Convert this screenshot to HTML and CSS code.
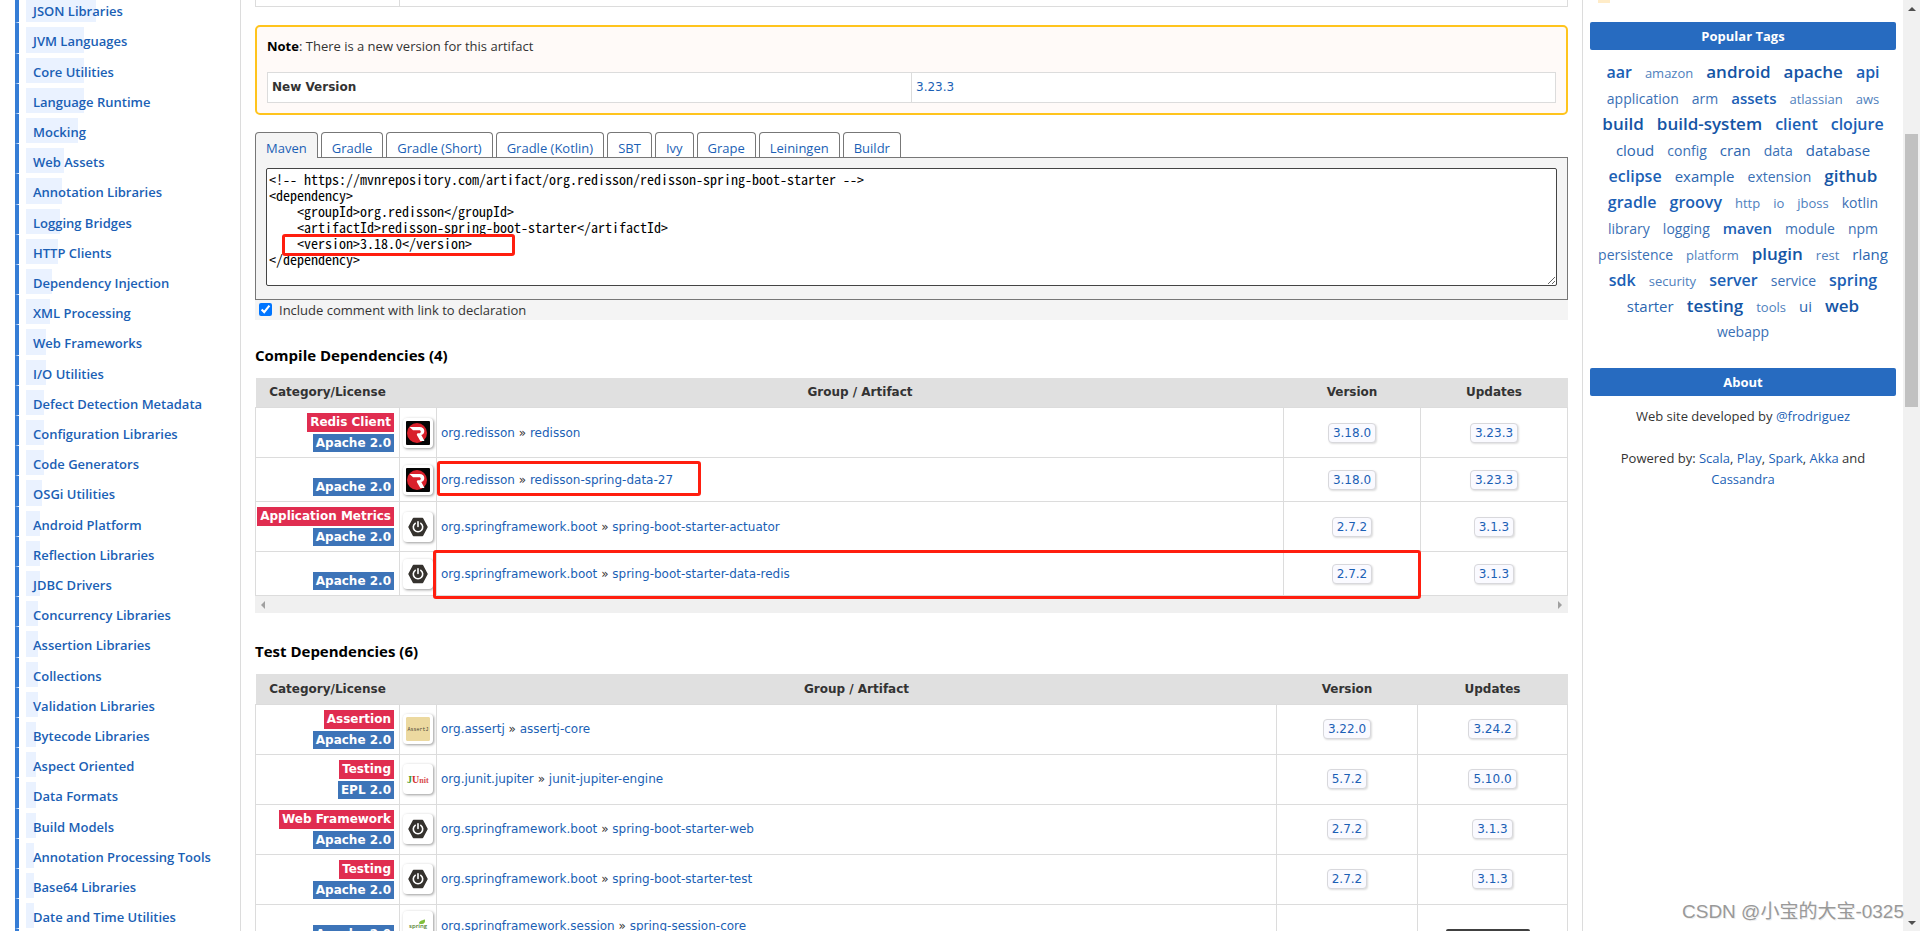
FILE: index.html
```
<!DOCTYPE html>
<html lang="en">
<head>
<meta charset="utf-8">
<title>redisson-spring-boot-starter 3.18.0</title>
<link rel="stylesheet" href="styles.css">
</head>
<body>
<svg class="defs" aria-hidden="true">
  <symbol id="redisson" viewBox="0 0 24 24">
    <rect width="24" height="24" fill="#050505"/>
    <circle cx="11" cy="12" r="10" fill="#d9202b"/>
    <path d="M3.500 6h10c3.200 0 4.800 1.700 4.800 4s-1.300 3.500-3 4l3.200 6h-4.200L10.700 13.700 11.500 12.300h1.700c1 0 1.600-.6 1.600-1.500s-.6-1.500-1.600-1.500H7z" fill="#fff"/>
  </symbol>
  <symbol id="boot" viewBox="0 0 24 24">
    <path d="M7.500 3.500h9L21 12l-4.500 8.500h-9L3 12z" fill="#35322e" stroke="#35322e" stroke-width="1.500" stroke-linejoin="round"/>
    <path d="M9.200 8.300a4.700 4.700 0 1 0 5.600 0M12 6.800v4.700" fill="none" stroke="#fff" stroke-width="1.600" stroke-linecap="round"/>
  </symbol>
</svg>
<div class="page">
  <nav class="categories" aria-label="Categories">
    <ul>
      <li><a href="#"><i style="width:70px"></i>JSON Libraries</a></li>
      <li><a href="#"><i style="width:58px"></i>JVM Languages</a></li>
      <li><a href="#"><i style="width:58px"></i>Core Utilities</a></li>
      <li><a href="#"><i style="width:58px"></i>Language Runtime</a></li>
      <li><a href="#"><i style="width:52px"></i>Mocking</a></li>
      <li><a href="#"><i style="width:38px"></i>Web Assets</a></li>
      <li><a href="#"><i style="width:36px"></i>Annotation Libraries</a></li>
      <li><a href="#"><i style="width:34px"></i>Logging Bridges</a></li>
      <li><a href="#"><i style="width:32px"></i>HTTP Clients</a></li>
      <li><a href="#"><i style="width:26px"></i>Dependency Injection</a></li>
      <li><a href="#"><i style="width:24px"></i>XML Processing</a></li>
      <li><a href="#"><i style="width:20px"></i>Web Frameworks</a></li>
      <li><a href="#"><i style="width:20px"></i>I/O Utilities</a></li>
      <li><a href="#"><i style="width:18px"></i>Defect Detection Metadata</a></li>
      <li><a href="#"><i style="width:18px"></i>Configuration Libraries</a></li>
      <li><a href="#"><i style="width:18px"></i>Code Generators</a></li>
      <li><a href="#"><i style="width:16px"></i>OSGi Utilities</a></li>
      <li><a href="#"><i style="width:14px"></i>Android Platform</a></li>
      <li><a href="#"><i style="width:14px"></i>Reflection Libraries</a></li>
      <li><a href="#"><i style="width:14px"></i>JDBC Drivers</a></li>
      <li><a href="#"><i style="width:12px"></i>Concurrency Libraries</a></li>
      <li><a href="#"><i style="width:12px"></i>Assertion Libraries</a></li>
      <li><a href="#"><i style="width:12px"></i>Collections</a></li>
      <li><a href="#"><i style="width:12px"></i>Validation Libraries</a></li>
      <li><a href="#"><i style="width:10px"></i>Bytecode Libraries</a></li>
      <li><a href="#"><i style="width:10px"></i>Aspect Oriented</a></li>
      <li><a href="#"><i style="width:10px"></i>Data Formats</a></li>
      <li><a href="#"><i style="width:10px"></i>Build Models</a></li>
      <li><a href="#"><i style="width:8px"></i>Annotation Processing Tools</a></li>
      <li><a href="#"><i style="width:8px"></i>Base64 Libraries</a></li>
      <li><a href="#"><i style="width:8px"></i>Date and Time Utilities</a></li>
      <li></li>
    </ul>
  </nav>

  <main class="content">
    <table class="info"><tr><td class="info-key"></td><td></td></tr></table>

    <section class="note">
      <p><b>Note</b>: There is a new version for this artifact</p>
      <table class="new-version"><tr><th scope="row">New Version</th><td><a href="#">3.23.3</a></td></tr></table>
    </section>

    <section class="snippet">
      <div class="tabs">
        <a class="tab active" href="#">Maven</a>
        <a class="tab" href="#">Gradle</a>
        <a class="tab" href="#">Gradle (Short)</a>
        <a class="tab" href="#">Gradle (Kotlin)</a>
        <a class="tab" href="#">SBT</a>
        <a class="tab" href="#">Ivy</a>
        <a class="tab" href="#">Grape</a>
        <a class="tab" href="#">Leiningen</a>
        <a class="tab" href="#">Buildr</a>
      </div>
      <div class="panel">
        <textarea aria-label="Maven declaration" spellcheck="false" readonly>&lt;!-- https://mvnrepository.com/artifact/org.redisson/redisson-spring-boot-starter --&gt;
&lt;dependency&gt;
    &lt;groupId&gt;org.redisson&lt;/groupId&gt;
    &lt;artifactId&gt;redisson-spring-boot-starter&lt;/artifactId&gt;
    &lt;version&gt;3.18.0&lt;/version&gt;
&lt;/dependency&gt;</textarea>
        <span class="mark mark-version"></span>
      </div>
      <label class="include"><input type="checkbox" checked>Include comment with link to declaration</label>
    </section>

    <section class="deps">
      <h2>Compile Dependencies (4)</h2>
      <div class="table-wrap">
        <table class="dep-table">
          <colgroup><col class="c-cat"><col class="c-icon"><col><col class="c-ver"><col class="c-upd"></colgroup>
          <thead><tr><th>Category/License</th><th></th><th>Group / Artifact</th><th>Version</th><th>Updates</th></tr></thead>
          <tbody>
            <tr><td class="cat"><a class="badge red" href="#">Redis Client</a><span class="badge">Apache 2.0</span></td><td class="ico"><svg><use href="#redisson"/></svg></td><td><a href="#">org.redisson</a> » <a href="#">redisson</a></td><td class="num"><a class="ver" href="#">3.18.0</a></td><td class="num"><a class="ver" href="#">3.23.3</a></td></tr>
            <tr><td class="cat"><span class="badge">Apache 2.0</span></td><td class="ico"><svg><use href="#redisson"/></svg></td><td><span class="marked"><a href="#">org.redisson</a> » <a href="#">redisson-spring-data-27</a><span class="mark mark-artifact"></span></span></td><td class="num"><a class="ver" href="#">3.18.0</a></td><td class="num"><a class="ver" href="#">3.23.3</a></td></tr>
            <tr><td class="cat"><a class="badge red" href="#">Application Metrics</a><span class="badge">Apache 2.0</span></td><td class="ico"><svg><use href="#boot"/></svg></td><td><a href="#">org.springframework.boot</a> » <a href="#">spring-boot-starter-actuator</a></td><td class="num"><a class="ver" href="#">2.7.2</a></td><td class="num"><a class="ver" href="#">3.1.3</a></td></tr>
            <tr><td class="cat"><span class="badge">Apache 2.0</span></td><td class="ico"><svg><use href="#boot"/></svg></td><td><a href="#">org.springframework.boot</a> » <a href="#">spring-boot-starter-data-redis</a></td><td class="num"><a class="ver" href="#">2.7.2</a></td><td class="num"><a class="ver" href="#">3.1.3</a></td></tr>
          </tbody>
        </table>
        <span class="mark mark-row"></span>
        <div class="hscroll"><span class="tri left"></span><span class="tri right"></span></div>
      </div>
    </section>

    <section class="deps test">
      <h2>Test Dependencies (6)</h2>
      <div class="table-wrap">
        <table class="dep-table">
          <colgroup><col class="c-cat"><col class="c-icon"><col><col class="c-ver"><col class="c-upd"></colgroup>
          <thead><tr><th>Category/License</th><th></th><th>Group / Artifact</th><th>Version</th><th>Updates</th></tr></thead>
          <tbody>
            <tr><td class="cat"><a class="badge red" href="#">Assertion</a><span class="badge">Apache 2.0</span></td><td class="ico"><svg viewBox="0 0 24 24"><rect width="24" height="24" rx="1" fill="#ecd9a0"/><text x="12" y="14" text-anchor="middle" font-family="Liberation Mono, monospace" font-size="5" fill="#4a4436">AssertJ</text></svg></td><td><a href="#">org.assertj</a> » <a href="#">assertj-core</a></td><td class="num"><a class="ver" href="#">3.22.0</a></td><td class="num"><a class="ver" href="#">3.24.2</a></td></tr>
            <tr><td class="cat"><a class="badge red" href="#">Testing</a><span class="badge">EPL 2.0</span></td><td class="ico"><svg viewBox="0 0 24 24"><text x="1" y="16" font-family="Liberation Serif, serif" font-weight="700" font-size="10"><tspan fill="#3f9b2c">J</tspan><tspan fill="#d32c2c">U</tspan><tspan fill="#d84a4a" font-size="8">nit</tspan></text></svg></td><td><a href="#">org.junit.jupiter</a> » <a href="#">junit-jupiter-engine</a></td><td class="num"><a class="ver" href="#">5.7.2</a></td><td class="num"><a class="ver" href="#">5.10.0</a></td></tr>
            <tr><td class="cat"><a class="badge red" href="#">Web Framework</a><span class="badge">Apache 2.0</span></td><td class="ico"><svg><use href="#boot"/></svg></td><td><a href="#">org.springframework.boot</a> » <a href="#">spring-boot-starter-web</a></td><td class="num"><a class="ver" href="#">2.7.2</a></td><td class="num"><a class="ver" href="#">3.1.3</a></td></tr>
            <tr><td class="cat"><a class="badge red" href="#">Testing</a><span class="badge">Apache 2.0</span></td><td class="ico"><svg><use href="#boot"/></svg></td><td><a href="#">org.springframework.boot</a> » <a href="#">spring-boot-starter-test</a></td><td class="num"><a class="ver" href="#">2.7.2</a></td><td class="num"><a class="ver" href="#">3.1.3</a></td></tr>
            <tr><td class="cat"><span class="badge">Apache 2.0</span></td><td class="ico"><svg viewBox="0 0 24 24"><text x="3" y="14" font-family="Open Sans, sans-serif" font-weight="600" font-size="6" fill="#4f7d2c">spring</text><path d="M13 9.500c0-2.500 2.500-3 6-4 .6 3.500-1.500 5.500-6 4z" fill="#7fbf3a"/></svg></td><td><a href="#">org.springframework.session</a> » <a href="#">spring-session-core</a></td><td class="num"></td><td class="num"></td></tr>
          </tbody>
        </table>
      </div>
    </section>
  </main>

  <aside class="side">
    <div class="chip"></div>
    <h3>Popular Tags</h3>
    <div class="tags">
      <div><a class="t5" href="#">aar</a><a class="t1" href="#">amazon</a><a class="t6" href="#">android</a><a class="t6" href="#">apache</a><a class="t5" href="#">api</a></div>
      <div><a class="t2" href="#">application</a><a class="t2" href="#">arm</a><a class="t4" href="#">assets</a><a class="t1" href="#">atlassian</a><a class="t1" href="#">aws</a></div>
      <div><a class="t6" href="#">build</a><a class="t6" href="#">build-system</a><a class="t5" href="#">client</a><a class="t5" href="#">clojure</a></div>
      <div><a class="t3" href="#">cloud</a><a class="t2" href="#">config</a><a class="t3" href="#">cran</a><a class="t2" href="#">data</a><a class="t3" href="#">database</a></div>
      <div><a class="t5" href="#">eclipse</a><a class="t3" href="#">example</a><a class="t2" href="#">extension</a><a class="t6" href="#">github</a></div>
      <div><a class="t5" href="#">gradle</a><a class="t5" href="#">groovy</a><a class="t1" href="#">http</a><a class="t1" href="#">io</a><a class="t1" href="#">jboss</a><a class="t2" href="#">kotlin</a></div>
      <div><a class="t2" href="#">library</a><a class="t2" href="#">logging</a><a class="t4" href="#">maven</a><a class="t2" href="#">module</a><a class="t2" href="#">npm</a></div>
      <div><a class="t2" href="#">persistence</a><a class="t1" href="#">platform</a><a class="t6" href="#">plugin</a><a class="t1" href="#">rest</a><a class="t3" href="#">rlang</a></div>
      <div><a class="t5" href="#">sdk</a><a class="t1" href="#">security</a><a class="t5" href="#">server</a><a class="t2" href="#">service</a><a class="t5" href="#">spring</a></div>
      <div><a class="t3" href="#">starter</a><a class="t6" href="#">testing</a><a class="t1" href="#">tools</a><a class="t3" href="#">ui</a><a class="t6" href="#">web</a></div>
      <div><a class="t2" href="#">webapp</a></div>
    </div>
    <h3>About</h3>
    <div class="about">
      <p>Web site developed by <a href="#">@frodriguez</a></p>
      <p>Powered by: <a href="#">Scala</a>, <a href="#">Play</a>, <a href="#">Spark</a>, <a href="#">Akka</a> and <a href="#">Cassandra</a></p>
    </div>
  </aside>

  <div class="vscroll"><span class="tri up"></span><span class="thumb"></span><span class="tri down"></span></div>
  <span class="toast"></span>
  <div class="watermark">CSDN @小宝的大宝-0325</div>
</div>
</body>
</html>
```
FILE: styles.css
```
* { box-sizing: border-box; }
body {
  margin: 0;
  background: #fff;
  color: #333;
  font: 13px/20px "Open Sans", "Noto Sans", sans-serif;
}
a { color: #1b5fb5; text-decoration: none; }
table { border-collapse: collapse; width: 100%; }
.defs { position: absolute; width: 0; height: 0; }
.page { position: relative; display: flex; height: 100vh; overflow: hidden; }

/* categories */
.categories { flex: 0 0 241px; border-right: 1px solid #dcdcdc; padding-left: 15px; }
.categories ul { list-style: none; margin: -7px 0 0; padding: 0; }
.categories li {
  display: flex;
  height: 30px;
  padding: 4px 0 0 7px;
  border-left: 4px solid #357dd6;
  border-bottom: 1px solid #fff;
  background: #fff;
}
.categories li:nth-child(5n+2) { height: 31px; }
.categories a {
  position: relative;
  z-index: 0;
  flex: 1;
  padding: 4px 7px 0;
  font-weight: 600;
}
.categories i { position: absolute; z-index: -1; left: 0; top: 0; bottom: 0; background: #eaf2ff; }

/* main column */
.content { flex: 1; min-width: 0; padding: 0 14px; }
.info td { height: 6px; padding: 0; border: 1px solid #dcdcdc; border-top: 0; }
.info-key { width: 144px; }
.note {
  margin-top: 18px;
  padding: 9px 10px 10px;
  border: 2px solid #ffc41d;
  border-radius: 5px;
  background: #fffaf8;
}
.note p { margin: 0 0 16px; }
.note b { color: #000; }
.new-version { background: #fff; table-layout: fixed; }
.new-version th, .new-version td {
  height: 30px;
  padding: 0 4px;
  border: 1px solid #dcdcdc;
  text-align: left;
  font: 12px/18px "DejaVu Sans", sans-serif;
}
.new-version th { font-weight: 700; }

.snippet { margin-top: 17px; background: #f4f4f4; }
.tabs { display: flex; gap: 3px; height: 25px; background: #fff; }
.tab {
  padding: 5px 10px 0;
  border: 1px solid #777;
  border-bottom: 0;
  border-radius: 4px 4px 0 0;
  background: #fff;
}
.tab.active { position: relative; z-index: 1; height: 26px; background: #f4f4f4; }
.panel { position: relative; padding: 10px 10px 13px; border: 1px solid #777; }
.panel textarea {
  display: block;
  width: 100%;
  height: 118px;
  padding: 2px;
  border: 1px solid #444;
  border-radius: 2px;
  outline: 0;
  color: #000;
  font: 14px/16px "Noto Sans Mono CJK SC", "Liberation Mono", monospace;
}
.include { display: flex; align-items: center; gap: 7px; height: 20px; padding-left: 4px; }
.include input { width: 13px; height: 13px; margin: 0; }

/* annotation frames */
.mark { position: absolute; border: 3px solid #ff1e0f; border-radius: 3px; pointer-events: none; }
.mark-version { left: 26px; top: 76px; width: 233px; height: 22px; }
.mark-artifact { left: -4px; right: -28px; top: -10px; bottom: -7px; }
.mark-row { left: 178px; right: 147px; top: 172px; bottom: 14px; }
.marked { position: relative; display: inline-block; }

/* dependency tables */
.deps { margin-top: 25px; }
.deps.test { margin-top: 28px; }
.deps h2 { margin: 0 0 13px; color: #000; font-size: 15px; line-height: 20px; font-weight: 700; }
.table-wrap { position: relative; }
.dep-table { table-layout: fixed; font: 12px/18px "DejaVu Sans", sans-serif; }
.c-cat { width: 144px; }
.c-icon { width: 37px; }
.c-ver { width: 137px; }
.c-upd { width: 147px; }
.test .c-ver { width: 141px; }
.test .c-upd { width: 150px; }
.dep-table th { height: 30px; padding: 0; background: #e0e0e0; font-weight: 700; }
.dep-table td { height: 44px; padding: 0 4px; border: 1px solid #dcdcdc; }
.dep-table .cat { padding: 5px 5px 5px 0; text-align: right; vertical-align: bottom; }
.badge {
  display: block;
  width: fit-content;
  height: 18px;
  margin-left: auto;
  padding: 0 3px;
  background: #3d74b8;
  color: #fff;
  font-weight: 700;
  white-space: nowrap;
}
.badge.red { height: 19px; margin-bottom: 2px; background: #e02d50; }
.dep-table .ico { padding: 0 3px; text-align: center; }
.ico svg {
  display: block;
  width: 30px;
  height: 30px;
  margin: 0 auto;
  padding: 3px;
  border-radius: 4px;
  background: #fff;
  box-shadow: 1px 1px 3px #999;
}
.dep-table .num { text-align: center; }
.ver {
  display: inline-block;
  padding: 0 4px;
  border: 1px solid #d8d8dc;
  border-radius: 4px;
  background: #fafaff;
  box-shadow: 1px 1px 2px #ddd;
}
.hscroll { display: flex; justify-content: space-between; align-items: center; height: 17px; padding: 0 6px; background: #f0f0f0; }
.tri { border: 4px solid transparent; }
.tri.left { border-left: 0; border-right-color: #a0a0a0; }
.tri.right { border-right: 0; border-left-color: #a0a0a0; }
.tri.up { border-top: 0; border-bottom-color: #505050; }
.tri.down { border-bottom: 0; border-top-color: #505050; }

/* right column */
.side { flex: 0 0 321px; padding: 0 7px; border-left: 1px solid #dcdcdc; text-align: center; }
.chip { width: 12px; height: 3px; margin: 0 0 19px 8px; background: #ffecc8; }
.side h3 {
  margin: 0;
  border-radius: 2px;
  background: #276bc0;
  color: #fff;
  font-size: 13px;
  line-height: 28px;
  font-weight: 700;
}
.tags { padding: 9px 0 23px; }
.tags div { display: flex; justify-content: center; align-items: baseline; gap: 13px; height: 26px; line-height: 26px; }
.t1 { font-size: 13px; color: #4f7fbd; }
.t2 { font-size: 14px; color: #3a70b5; }
.t3 { font-size: 15px; color: #2b66b0; }
.t4 { font-size: 15px; font-weight: 600; }
.t5 { font-size: 16px; font-weight: 600; }
.t6 { font-size: 17px; font-weight: 600; color: #1555a5; }
.about { padding: 10px 20px; line-height: 21px; }
.about p { margin: 0 0 21px; }

/* page scrollbar and overlays */
.vscroll {
  display: flex;
  flex: 0 0 17px;
  flex-direction: column;
  justify-content: space-between;
  align-items: center;
  padding: 7px 0 6px;
  background: #f1f1f1;
}
.thumb { position: absolute; top: 134px; width: 13px; height: 273px; background: #c1c1c1; }
.toast { position: absolute; right: 390px; bottom: 0; width: 84px; height: 2px; border-radius: 3px 3px 0 0; background: #404040; }
.watermark {
  position: absolute;
  right: 16px;
  bottom: 5px;
  color: #999;
  font: 19px/28px "Liberation Sans", "Noto Sans CJK SC", sans-serif;
  text-shadow: 1px 1px 0 #eee;
}
```
